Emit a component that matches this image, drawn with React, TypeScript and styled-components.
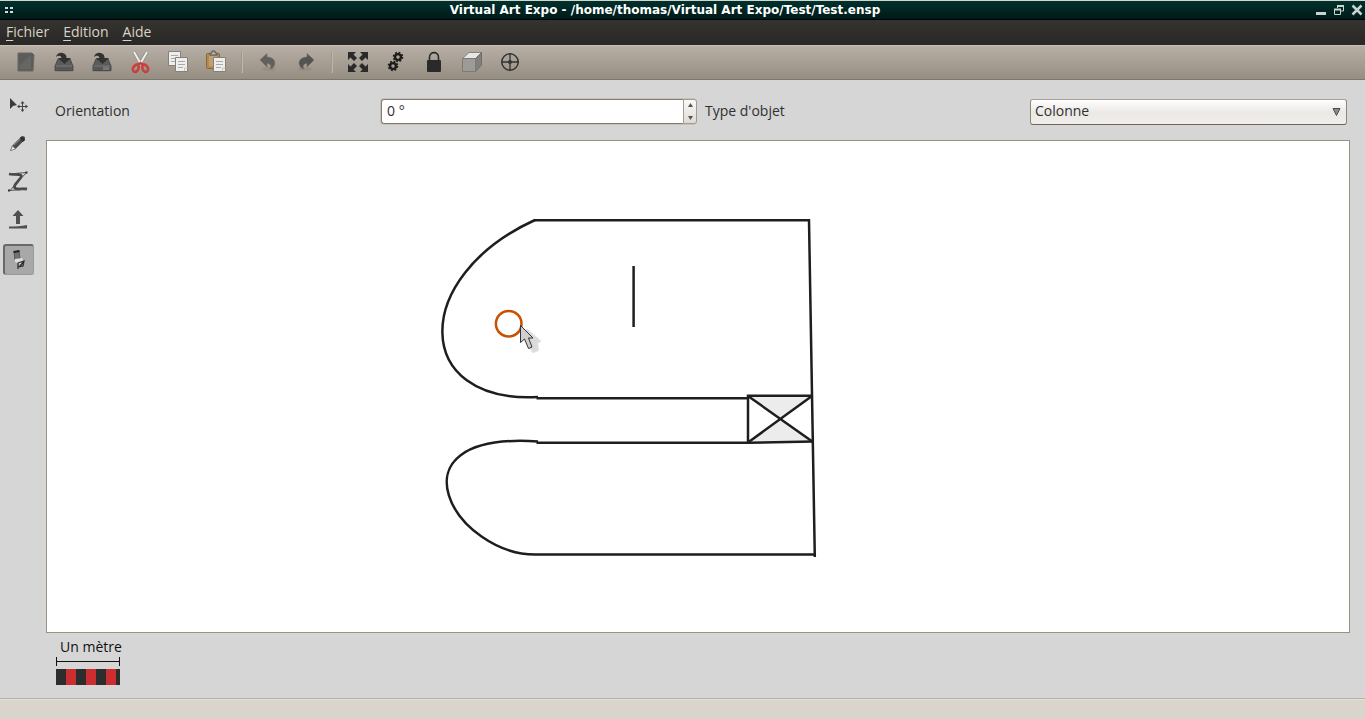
import React, { useState } from "react";
import styled, { createGlobalStyle, css } from "styled-components";

const GlobalStyle = createGlobalStyle`
  * { box-sizing: border-box; }
  body {
    margin: 0;
    background: #d6d6d6;
    color: #303030;
    font: 14px/20px "Open Sans", "Noto Sans", sans-serif;
  }
  button, input, select { font: inherit; color: inherit; }
`;

const Window = styled.div`
  display: flex;
  flex-direction: column;
  min-height: 100vh;
`;

const TitleBar = styled.header`
  display: grid;
  grid-template-columns: 29px 1fr 64px;
  align-items: center;
  height: 20px;
  border-top: 1px solid #d8d4cc;
  border-bottom: 1px solid #000000;
  background: linear-gradient(#00312d, #001a18);
`;

const WindowMenu = styled.button`
  justify-self: start;
  display: flex;
  padding: 0 0 0 4px;
  border: 0;
  background: none;
`;

const Title = styled.h1`
  margin: 0;
  text-align: center;
  white-space: nowrap;
  color: #ffffff;
  font: bold 12px/18px "DejaVu Sans", sans-serif;
`;

const WindowControls = styled.div`
  display: flex;
  justify-content: flex-end;
  gap: 6px;
  padding-right: 2px;
`;

const ControlButton = styled.button`
  display: flex;
  padding: 0;
  border: 0;
  background: none;
`;

const MenuBar = styled.nav`
  display: flex;
  align-items: center;
  gap: 14px;
  height: 25px;
  padding: 0 0 2px 6px;
  background: linear-gradient(#35332f, #292826);
`;

const MenuItem = styled.button`
  padding: 0;
  border: 0;
  background: none;
  color: #d8d3c6;
  line-height: 20px;
  &::first-letter {
    text-decoration: underline;
    text-underline-offset: 3px;
  }
`;

const ToolBar = styled.div`
  display: flex;
  align-items: center;
  height: 35px;
  padding: 0 0 2px 7px;
  border-top: 1px solid #c6c0b7;
  border-bottom: 1px solid #7d766b;
  background: linear-gradient(#b7afa5, #968e82);
`;

const ToolButton = styled.button`
  display: flex;
  align-items: center;
  justify-content: center;
  width: 38px;
  height: 30px;
  padding: 0;
  border: 0;
  background: none;
`;

const Separator = styled.span`
  width: 2px;
  height: 22px;
  margin: 0 6px;
  background: linear-gradient(to right, #a0988d 50%, #bdb6ac 50%);
`;

const Workspace = styled.div`
  display: flex;
  flex: 1;
`;

const SideBar = styled.aside`
  display: flex;
  flex-direction: column;
  gap: 7px;
  width: 46px;
  padding: 12px 0 0 3px;
`;

const SideButton = styled.button<{ $active?: boolean }>`
  display: flex;
  align-items: flex-start;
  justify-content: flex-start;
  width: 31px;
  height: 31px;
  padding: 2px 0 0 3px;
  border: 0;
  background: none;
  ${(p) =>
    p.$active &&
    css`
      padding: 1px 0 0 1px;
      border: 1px solid #999999;
      border-top: 2px solid #686868;
      border-left: 2px solid #686868;
      border-radius: 3px;
      background: #a8a8a8;
    `}
`;

const Main = styled.main`
  display: flex;
  flex: 1;
  flex-direction: column;
  min-width: 0;
  padding-right: 15px;
`;

const Options = styled.form`
  display: grid;
  grid-template-columns: repeat(4, 1fr);
  gap: 8px;
  align-items: center;
  padding: 18px 3px 15px 9px;
`;

const OptionLabel = styled.label`
  padding-bottom: 2px;
`;

const Spin = styled.div`
  display: flex;
  height: 27px;
  border: 1px solid #c6c1b9;
  border-right: 0;
  border-radius: 4px;
  background: #ffffff;
`;

const SpinInput = styled.input`
  flex: 1;
  min-width: 0;
  padding: 0 5px 2px;
  border: 1px solid #857c70;
  border-right-color: #a39a8d;
  border-radius: 3px 0 0 3px;
  background: #ffffff;
  outline: 0;
`;

const SpinButtons = styled.div`
  display: flex;
  flex-direction: column;
  width: 13px;
  border: 1px solid #a39a8d;
  border-left: 0;
  border-radius: 0 3px 3px 0;
  background: linear-gradient(#fbfaf9, #dedad5);
`;

const SpinButton = styled.button`
  display: flex;
  flex: 1;
  align-items: center;
  justify-content: center;
  padding: 0;
  border: 0;
  background: none;
`;

const SelectBox = styled.div`
  display: grid;
  align-items: center;
  > * { grid-area: 1 / 1; }
  svg { justify-self: end; margin-right: 6px; pointer-events: none; }
`;

const Select = styled.select`
  appearance: none;
  width: 100%;
  height: 26px;
  padding: 0 4px 2px;
  border: 1px solid #8f877b;
  border-top-color: #a79f94;
  border-bottom-color: #6f675b;
  border-radius: 3px;
  outline: 0;
  background: linear-gradient(#ffffff, #ece9e5 50%, #f0eeea);
`;

const Canvas = styled.section`
  display: flex;
  flex: 1;
  border: 1px solid #9c9283;
  background: #ffffff;
`;

const Plan = styled.svg`
  flex: 1;
  min-height: 420px;
  min-width: 0;
`;

const Scale = styled.figure`
  display: flex;
  flex-direction: column;
  align-self: flex-start;
  margin: 0;
  padding: 4px 0 13px 10px;
`;

const ScaleLabel = styled.figcaption`
  padding-left: 4px;
  color: #111111;
`;

const StatusBar = styled.footer`
  height: 21px;
  border-top: 1px solid #b5b0a6;
  background: #d9d4cc;
  box-shadow: inset 0 1px #e6e2db;
`;

const Icon = ({ children, size = 24 }: { children: React.ReactNode; size?: number }) => (
  <svg width={size} height={size} viewBox={`0 0 ${size} ${size}`} aria-hidden="true">
    {children}
  </svg>
);

const NewIcon = () => (
  <Icon>
    <path d="M4 3h14l2 2-1 16H4z" fill="#5c5c5b" stroke="#686663" />
    <path d="M6 15 17 5v14H6z" fill="#666665" />
  </Icon>
);

const Drive = ({ save }: { save?: boolean }) => (
  <Icon>
    <ellipse cx="12" cy="21" rx="10" ry="1" fill="#8b8479" />
    <path d="M6 9h12l3 7v4.500H3V16z" fill="#5b5b5a" stroke="#4b4b4a" />
    <path d="M4 16h16" stroke="#777674" />
    <path d="M5 18.500h14" stroke="#555554" strokeWidth="2" />
    {save && <path d="M13 16.500h6v3.500h-6z" fill="#77777a" />}
    <path d="M4 7C5 3 9 2 12 3.500 14 4.500 14.500 6 14.500 8H19l-6.500 6L6 8h3.500C9 5.500 6.500 5 4 7z" fill="#323232" />
  </Icon>
);

const CutIcon = () => (
  <Icon>
    <path d="m6 2 7.500 13M19 2l-7.500 13" stroke="#8d8880" strokeWidth="3.500" />
    <path d="m6 2 7.500 13M19 2l-7.500 13" stroke="#eeeeec" strokeWidth="2" />
    <path d="M10.500 14.500c-2-.5-4.500 1-5.500 3.500-1 3 1.500 4.500 3.500 3.500 2-1.200 2.500-4 2-7l2-1.500 2 1.500c-.5 3 0 5.800 2 7 2 1 4.500-.5 3.500-3.500-1-2.500-3.500-4-5.500-3.500" fill="none" stroke="#c8413f" strokeWidth="2.600" />
  </Icon>
);

const Sheet = ({ x, y }: { x: number; y: number }) => (
  <g transform={`translate(${x} ${y})`}>
    <path d="M.5.5h12v14H.5z" fill="#eeeeec" stroke="#82817d" />
    <path d="M3 4.500h7M3 7.500h7M3 10.500h5" stroke="#aaa9a5" />
    <path d="M9.500 14v-3h3" fill="none" stroke="#c5c4bf" />
  </g>
);

const CopyIcon = () => (
  <Icon>
    <Sheet x={2} y={1} />
    <Sheet x={9} y={7} />
  </Icon>
);

const PasteIcon = () => (
  <Icon>
    <rect x="2.500" y="3.500" width="13" height="15" rx="1" fill="#b9894b" stroke="#82673f" />
    <path d="M5 6h8v10H5z" fill="#c0a078" />
    <path d="M6 5V3h2V1h3v2h2v2z" fill="#b7b6b0" stroke="#555753" />
    <Sheet x={9} y={7} />
  </Icon>
);

const Arrow = ({ flip }: { flip?: boolean }) => (
  <Icon>
    <ellipse cx={flip ? 11 : 13} cy="19" rx="7" ry="2" fill="#968e83" />
    <g transform={flip ? "matrix(-1 0 0 1 24 0)" : undefined}>
      <path d="m4 10 7-6.500V7c6 .3 9 4 7.500 8-.8 2.200-2 3.500-4.500 4 2-3 .5-5.500-3-5.500v3.500z" fill={flip ? "#535353" : "#60605f"} stroke="#6e6a65" strokeWidth=".5" />
    </g>
  </Icon>
);

const ExpandIcon = () => (
  <Icon>
    {[0, 90, 180, 270].map((a) => (
      <path key={a} d="M2 2h8L7.500 4.500 11 8 8 11 4.500 7.500 2 10z" fill="#2a2a2a" transform={`rotate(${a} 12 12)`} />
    ))}
  </Icon>
);

const Gear = ({ x, y }: { x: number; y: number }) => (
  <g transform={`translate(${x} ${y})`}>
    <circle r="2.900" fill="none" stroke="#1c1c1c" strokeWidth="2.400" />
    <circle r="4.400" fill="none" stroke="#1c1c1c" strokeWidth="1.800" strokeDasharray="1.800 1.655" />
  </g>
);

const GearsIcon = () => (
  <Icon>
    <Gear x={14} y={7} />
    <Gear x={9} y={16} />
  </Icon>
);

const LockIcon = () => (
  <Icon>
    <path d="M7.500 11V7.500C7.500 1 16.500 1 16.500 7.500V11" fill="none" stroke="#2a2a2a" strokeWidth="1.600" />
    <rect x="5" y="10" width="14" height="12" rx="1" fill="#2a2a2a" />
  </Icon>
);

const CubeIcon = () => (
  <Icon>
    <path d="M2.500 8.500 9 2.500h12.500l-6 6z" fill="#e8e7e4" stroke="#85827d" />
    <path d="M15.500 8.500l6-6V15l-6 6.500z" fill="#81807e" stroke="#706e6b" />
    <path d="M2.500 8.500h13v13h-13z" fill="#9c9b98" stroke="#7c7a77" />
  </Icon>
);

const TargetIcon = () => (
  <Icon>
    <circle cx="12" cy="12" r="8.200" fill="none" stroke="#333333" strokeWidth="1.500" />
    <path d="M12 3v18M3 12h18" stroke="#333333" strokeWidth="1.300" />
    <circle cx="12" cy="12" r="2" fill="#333333" />
  </Icon>
);

const MoveIcon = () => (
  <Icon>
    <path d="M4 4v11l3-3 4-1z" fill="#3a3a3a" />
    <path d="M16.500 8v9M12 12.500h9" stroke="#444444" />
    <path d="m16.500 7 2 2.500h-4zM16.500 18l2-2.500h-4zM11 12.500l2.500-2v4zM22 12.500l-2.500-2v4z" fill="#444444" />
  </Icon>
);

const PencilIcon = () => (
  <Icon>
    <path d="m4 19 2-5 9-9c3-2 5 0 3.500 3l-9 9z" fill="#4a4a4a" />
    <path d="m8 13 8-8" stroke="#777777" strokeWidth="1.500" />
    <path d="m4.500 18.500 2-4.500 3 3z" fill="#f0f0f0" stroke="#777777" strokeWidth=".7" />
    <path d="m15 5 3 4" stroke="#303030" strokeWidth="3" />
  </Icon>
);

const CurveIcon = () => (
  <Icon>
    <path d="M3 4c4 .8 7 0 10 .5 2.500.5 3 1.500 1.500 3.500L9 15c-1.500 2.500 0 4 3 4 3 .2 6-.5 9 0" fill="none" stroke="#454545" strokeWidth="2.800" />
    <path d="M3 4 20.500 2.500 4 20.500l17-1.500" fill="none" stroke="#555555" />
    <path d="M19.500 1.500h2v2h-2zM2 19.500h2v2H2z" fill="#333333" />
  </Icon>
);

const ExtrudeIcon = () => (
  <Icon>
    <path d="m12 2 5.500 6H14v8h-4V8H6.500zM3 18.500c7 0 12-.5 18-1.500v3.500H3z" fill="#505050" />
  </Icon>
);

const ObjectIcon = () => (
  <Icon>
    <path d="m8 5 5-1 1 8-5 1z" fill="#727272" stroke="#4a4a4a" strokeWidth=".8" />
    <path d="m7.500 5 6-1" stroke="#222222" strokeWidth="2" />
    <path d="m9 12 7-1 2 4-3 3-6-3z" fill="#dddddd" />
    <path d="m12 16 6-2-1 5-5 1zM12 16v6M18 14l-4 5" fill="none" stroke="#303030" strokeWidth="1.300" />
  </Icon>
);

const topTools: (null | [string, React.ReactNode])[] = [
  ["Nouveau", <NewIcon />],
  ["Ouvrir", <Drive />],
  ["Enregistrer", <Drive save />],
  ["Couper", <CutIcon />],
  ["Copier", <CopyIcon />],
  ["Coller", <PasteIcon />],
  null,
  ["Annuler", <Arrow />],
  ["Rétablir", <Arrow flip />],
  null,
  ["Ajuster", <ExpandIcon />],
  ["Paramètres", <GearsIcon />],
  ["Verrouiller", <LockIcon />],
  ["Vue 3D", <CubeIcon />],
  ["Centrer", <TargetIcon />],
];

const sideTools: [string, React.ReactNode][] = [
  ["Déplacer", <MoveIcon />],
  ["Dessiner", <PencilIcon />],
  ["Courbe", <CurveIcon />],
  ["Extruder", <ExtrudeIcon />],
  ["Objet", <ObjectIcon />],
];

const FloorPlan = () => (
  <Plan role="img" aria-label="Plan">
    <g transform="translate(-47 -141)" fill="none" stroke="#1e1e1e" strokeWidth="2.500">
      <path d="M748 396h64l-32 23zM748 442.500l32-23.500 33 22.500z" fill="#ececec" stroke="none" />
      <path d="M534 220.200H809L814.800 557" />
      <path d="M535 220C410 277 412 404 538 397" />
      <path d="M536.500 398.300H748M536.500 442.800H748L813 441.500" />
      <path d="M538 441.500C382 431 456 558 539 554.500H816" />
      <path d="M633.600 266v61" />
      <path d="M748 443.500V395.700H812M748 396l65 46M748 442.500l64-46.500" />
      <circle cx="508.700" cy="323.700" r="12.800" stroke="#c85000" />
      <path d="m527 330 13 11-3 2 1 7-5 2-5-8z" fill="#dadada" stroke="#dedede" strokeWidth="2" strokeLinejoin="round" />
      <path d="M520.500 325.500v17l4-3.500 4 9.500 3.500-1.500-3.500-9h4.500z" fill="#cfcfcf" stroke="#333333" strokeWidth="1" />
    </g>
  </Plan>
);

export default function App() {
  const [tool, setTool] = useState(4);
  const [angle, setAngle] = useState(0);
  return (
    <>
      <GlobalStyle />
      <Window>
        <TitleBar>
          <WindowMenu aria-label="Menu de la fenêtre">
            <svg width="10" height="8">
              <path d="M1 1h3v2H1zM6 1h3v2H6zM1 5h3v2H1zM6 5h3v2H6z" fill="#d5dcd9" />
            </svg>
          </WindowMenu>
          <Title>Virtual Art Expo - /home/thomas/Virtual Art Expo/Test/Test.ensp</Title>
          <WindowControls>
            <ControlButton aria-label="Réduire">
              <svg width="12" height="12"><path d="M1 8h10v3H1z" fill="#c8d4cf" /></svg>
            </ControlButton>
            <ControlButton aria-label="Restaurer">
              <svg width="12" height="12">
                <path d="M4.500 4V2h6v5H8M1.500 5.500h6v5h-6z" fill="none" stroke="#c8d4cf" />
                <path d="M4 2h7M1 5.500h7" stroke="#c8d4cf" strokeWidth="2" />
              </svg>
            </ControlButton>
            <ControlButton aria-label="Fermer">
              <svg width="12" height="12"><path d="m1.500 1.500 9 9M10.500 1.500l-9 9" stroke="#c8d4cf" strokeWidth="2.500" /></svg>
            </ControlButton>
          </WindowControls>
        </TitleBar>
        <MenuBar>
          <MenuItem>Fichier</MenuItem>
          <MenuItem>Edition</MenuItem>
          <MenuItem>Aide</MenuItem>
        </MenuBar>
        <ToolBar role="toolbar">
          {topTools.map((t, i) =>
            t ? (
              <ToolButton key={i} aria-label={t[0]}>{t[1]}</ToolButton>
            ) : (
              <Separator key={i} />
            )
          )}
        </ToolBar>
        <Workspace>
          <SideBar>
            {sideTools.map(([name, icon], i) => (
              <SideButton key={name} aria-label={name} aria-pressed={tool === i} $active={tool === i} onClick={() => setTool(i)}>
                {icon}
              </SideButton>
            ))}
          </SideBar>
          <Main>
            <Options onSubmit={(e) => e.preventDefault()}>
              <OptionLabel htmlFor="angle">Orientation</OptionLabel>
              <Spin>
                <SpinInput id="angle" value={`${angle} °`} onChange={(e) => setAngle(parseInt(e.target.value, 10) || 0)} />
                <SpinButtons>
                  <SpinButton type="button" aria-label="Augmenter" onClick={() => setAngle(angle + 1)}>
                    <svg width="5" height="5"><path d="M2.500 0 5 4H0z" fill="#555555" /></svg>
                  </SpinButton>
                  <SpinButton type="button" aria-label="Diminuer" onClick={() => setAngle(angle - 1)}>
                    <svg width="5" height="5"><path d="M0 1h5L2.500 5z" fill="#555555" /></svg>
                  </SpinButton>
                </SpinButtons>
              </Spin>
              <OptionLabel htmlFor="kind">Type d'objet</OptionLabel>
              <SelectBox>
                <Select id="kind"><option>Colonne</option></Select>
                <svg width="9" height="9"><path d="M1 1.500h7l-3.500 7z" fill="#8a8a86" stroke="#4c4c4a" /></svg>
              </SelectBox>
            </Options>
            <Canvas><FloorPlan /></Canvas>
            <Scale>
              <ScaleLabel>Un mètre</ScaleLabel>
              <svg width="64" height="28" aria-hidden="true">
                <path d="M.5 0v9M63.500 0v9M0 4.500h64" stroke="#111111" />
                <path d="M0 12h64v16H0z" fill="#2d2d2d" />
                <path d="M10 12h10v16H10zM30 12h10v16H30zM50 12h10v16H50z" fill="#cb2d30" />
              </svg>
            </Scale>
          </Main>
        </Workspace>
        <StatusBar />
      </Window>
    </>
  );
}
